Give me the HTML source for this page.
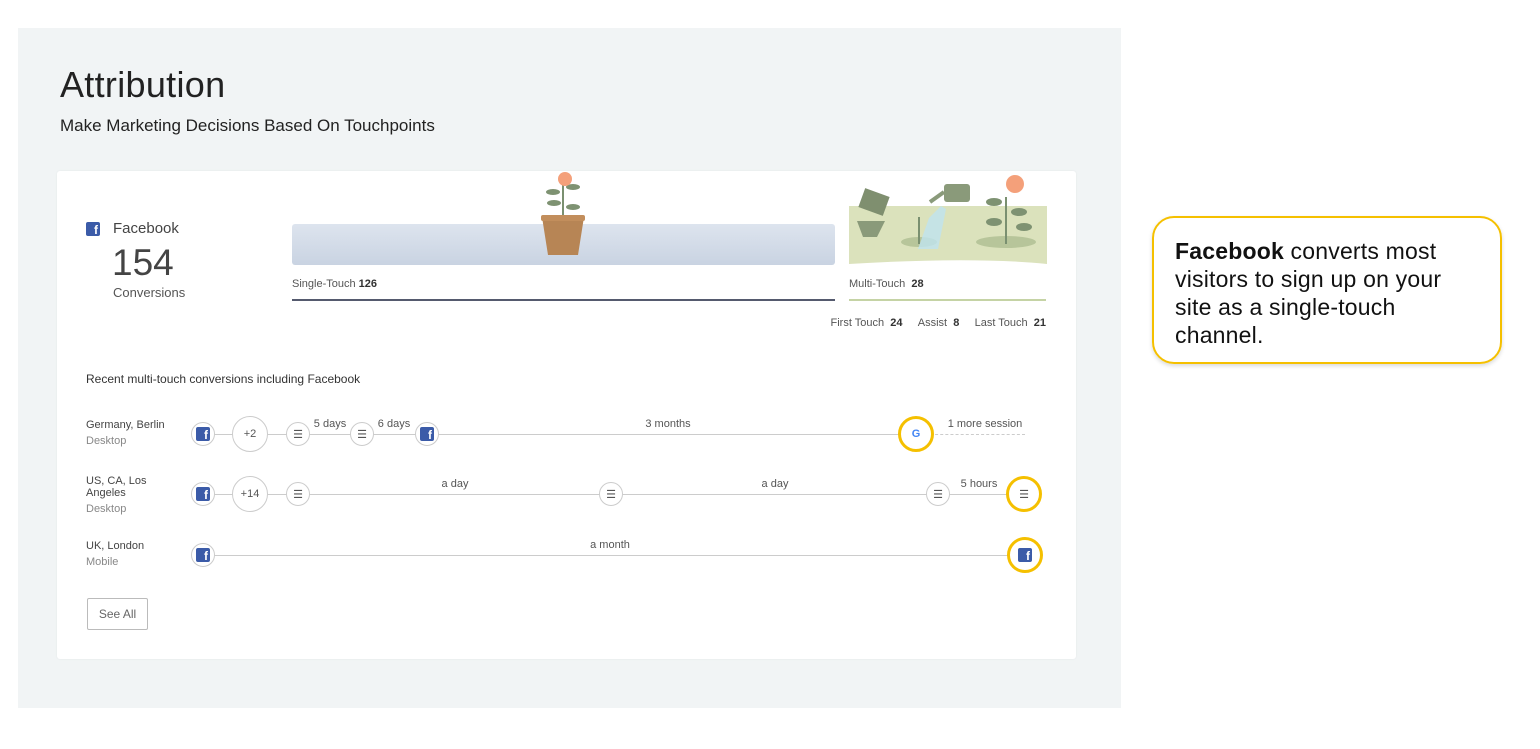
<!DOCTYPE html>
<html><head><meta charset="utf-8"><style>
*{margin:0;padding:0;box-sizing:border-box}
body{width:1540px;height:749px;background:#fff;font-family:"Liberation Sans",Arial,sans-serif;position:relative;overflow:hidden;color:#333}
.a{position:absolute}
.bg{left:18px;top:28px;width:1103px;height:680px;background:#f1f4f5}
.card{left:57px;top:171px;width:1019px;height:488px;background:#fff;border-radius:3px;box-shadow:0 0 2px rgba(0,0,0,.06)}
.t{white-space:nowrap}
.c{position:absolute;border:1px solid #ccc;border-radius:50%;background:#fff;display:flex;align-items:center;justify-content:center;font-size:11px;color:#555}
.s{width:24px;height:24px}
.b{width:36px;height:36px}
.h{width:36px;height:36px;border:3px solid #f5c000}
.fb{width:14px;height:14px;background:#3b5ba8;border-radius:2px;color:#fff;font-weight:bold;font-size:12px;line-height:16px;text-align:right;padding-right:2px;overflow:hidden}
.ln{position:absolute;height:1px;background:#ccc}
.lb{position:absolute;font-size:11px;color:#555;white-space:nowrap;transform:translateX(-50%)}
.loc{position:absolute;left:86px;font-size:11px;color:#444;line-height:12px}
.loc span{color:#888;display:block;margin-top:4px}
</style></head><body>
<div class="a bg"></div>
<div class="a t" style="left:60px;top:64px;font-size:36px;color:#222;letter-spacing:0.3px">Attribution</div>
<div class="a t" style="left:60px;top:116px;font-size:17px;color:#222">Make Marketing Decisions Based On Touchpoints</div>
<div class="a card"></div>
<div class="a fb" style="left:86px;top:222px">f</div>
<div class="a t" style="left:113px;top:220px;font-size:15px;color:#444">Facebook</div>
<div class="a t" style="left:112px;top:242px;font-size:37px;color:#444">154</div>
<div class="a t" style="left:113px;top:285px;font-size:13px;color:#555">Conversions</div>
<div class="a" style="left:292px;top:224px;width:543px;height:41px;border-radius:3px;background:linear-gradient(#dde4ee,#c9d3e2)"></div>
<svg class="a" style="left:538px;top:170px" width="50" height="86"><path d="M25 48V12" stroke="#7a9070" stroke-width="2"/><ellipse cx="15" cy="22" rx="7" ry="3" fill="#7e9272"/><ellipse cx="35" cy="17" rx="7" ry="3" fill="#7e9272"/><ellipse cx="16" cy="33" rx="7" ry="3" fill="#7e9272"/><ellipse cx="35" cy="37" rx="7" ry="3" fill="#7e9272"/><circle cx="27" cy="9" r="7" fill="#f4a07a"/><path d="M4 47h42l-6 38H10z" fill="#b78555"/><rect x="3" y="45" width="44" height="6" rx="2" fill="#c28e5c"/></svg>
<div class="a t" style="left:292px;top:278px;font-size:11px;color:#555">Single-Touch <b style="color:#333">126</b></div>
<div class="a" style="left:292px;top:299px;width:543px;height:2px;background:#555a6e"></div>
<svg class="a" style="left:849px;top:172px" width="198" height="94"><path d="M0 34h198v58c-60-6-130-4-198 0z" fill="#dbe2bc"/><ellipse cx="70" cy="70" rx="18" ry="5" fill="#b7c59a"/><ellipse cx="157" cy="70" rx="30" ry="6" fill="#b7c59a"/><path d="M8 49h28l-8 16h-14z" fill="#8a9a7a"/><rect x="12" y="20" width="26" height="20" transform="rotate(20 25 30)" fill="#7f8f6f"/><path d="M80 46l12-12 5 3-8 40h-20z" fill="#bfe4ef" opacity=".8"/><path d="M70 72V45" stroke="#7a9070" stroke-width="2"/><rect x="95" y="12" width="26" height="18" rx="3" fill="#8a9a7a"/><path d="M95 20l-14 10" stroke="#8a9a7a" stroke-width="4"/><path d="M157 72V25" stroke="#7a9070" stroke-width="2"/><ellipse cx="145" cy="30" rx="8" ry="4" fill="#7e9272"/><ellipse cx="170" cy="40" rx="8" ry="4" fill="#7e9272"/><ellipse cx="145" cy="50" rx="8" ry="4" fill="#7e9272"/><ellipse cx="175" cy="55" rx="8" ry="4" fill="#7e9272"/><circle cx="166" cy="12" r="9" fill="#f4a07a"/></svg>
<div class="a t" style="left:849px;top:278px;font-size:11px;color:#555">Multi-Touch &nbsp;<b style="color:#333">28</b></div>
<div class="a" style="left:849px;top:299px;width:197px;height:2px;background:#c5d3a5"></div>
<div class="a t" style="right:494px;top:317px;font-size:11px;color:#555">First Touch &nbsp;<b style="color:#333">24</b> &nbsp;&nbsp;&nbsp;&nbsp;Assist &nbsp;<b style="color:#333">8</b> &nbsp;&nbsp;&nbsp;&nbsp;Last Touch &nbsp;<b style="color:#333">21</b></div>
<div class="a t" style="left:86px;top:372px;font-size:12px;color:#333">Recent multi-touch conversions including Facebook</div>

<div class="loc" style="top:419px">Germany, Berlin<span>Desktop</span></div>
<div class="ln" style="left:203px;top:434px;width:710px"></div>
<div class="ln" style="left:930px;top:434px;width:95px;background:none;border-top:1px dashed #ccc"></div>
<div class="c s" style="left:191px;top:422px"><div class="fb">f</div></div>
<div class="c b" style="left:232px;top:416px">+2</div>
<div class="c s" style="left:286px;top:422px">☰</div>
<div class="lb" style="left:330px;top:418px">5 days</div>
<div class="c s" style="left:350px;top:422px">☰</div>
<div class="lb" style="left:394px;top:418px">6 days</div>
<div class="c s" style="left:415px;top:422px"><div class="fb">f</div></div>
<div class="lb" style="left:668px;top:418px">3 months</div>
<div class="c h" style="left:898px;top:416px;font-weight:bold;color:#4285f4">G</div>
<div class="lb" style="left:985px;top:418px">1 more session</div>

<div class="loc" style="top:475px">US, CA, Los<br>Angeles<span>Desktop</span></div>
<div class="ln" style="left:203px;top:494px;width:810px"></div>
<div class="c s" style="left:191px;top:482px"><div class="fb">f</div></div>
<div class="c b" style="left:232px;top:476px">+14</div>
<div class="c s" style="left:286px;top:482px">☰</div>
<div class="lb" style="left:455px;top:478px">a day</div>
<div class="c s" style="left:599px;top:482px">☰</div>
<div class="lb" style="left:775px;top:478px">a day</div>
<div class="c s" style="left:926px;top:482px">☰</div>
<div class="lb" style="left:979px;top:478px">5 hours</div>
<div class="c h" style="left:1006px;top:476px">☰</div>

<div class="loc" style="top:540px">UK, London<span>Mobile</span></div>
<div class="ln" style="left:203px;top:555px;width:810px"></div>
<div class="c s" style="left:191px;top:543px"><div class="fb">f</div></div>
<div class="lb" style="left:610px;top:539px">a month</div>
<div class="c h" style="left:1007px;top:537px"><div class="fb">f</div></div>

<div class="a" style="left:87px;top:598px;width:61px;height:32px;border:1px solid #bbb;border-radius:2px;font-size:12px;color:#666;text-align:center;line-height:30px">See All</div>

<div class="a" style="left:1152px;top:216px;width:350px;height:148px;border:2px solid #f5c000;border-radius:22px;box-shadow:0 2px 4px rgba(0,0,0,.15);padding:19px 0 0 21px;font-size:23px;line-height:28px;color:#111;letter-spacing:0.2px;white-space:nowrap">
<b>Facebook</b> converts most<br>visitors to sign up on your<br>site as a single-touch<br>channel.</div>
</body></html>
